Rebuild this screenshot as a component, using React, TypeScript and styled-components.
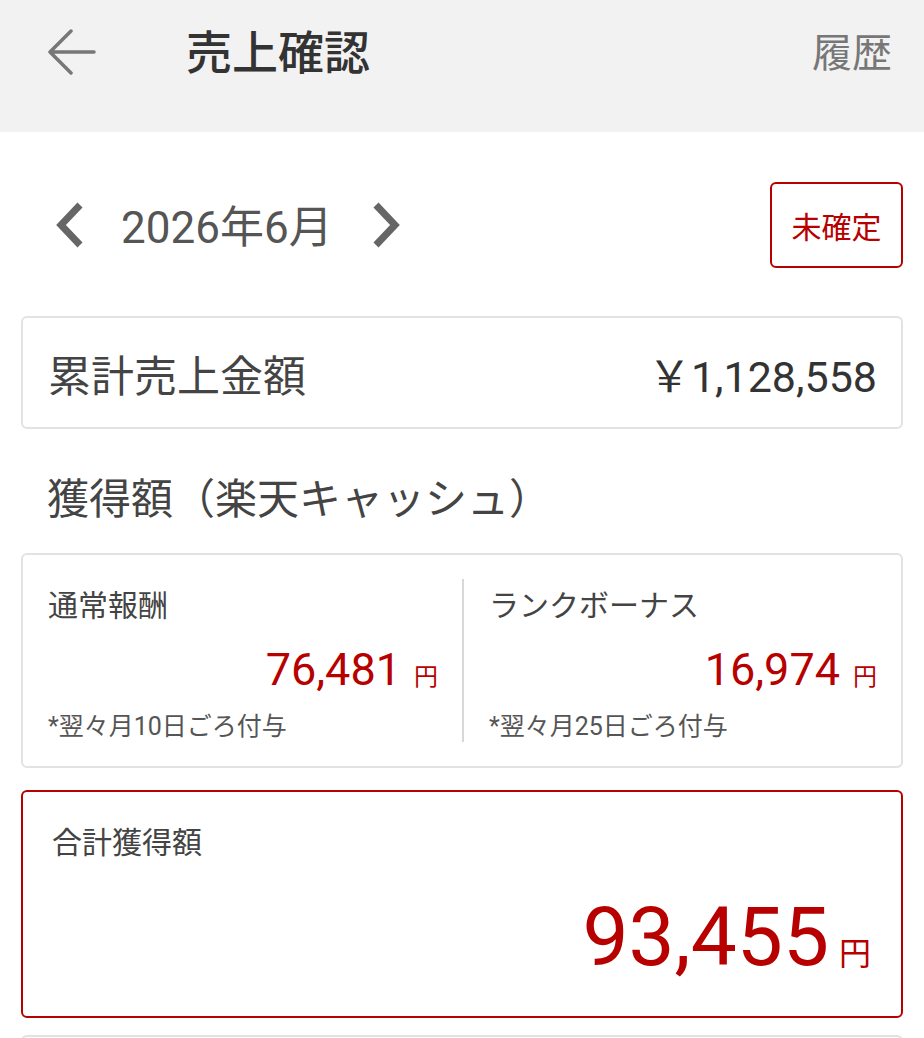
import React from "react";
import styled, { createGlobalStyle } from "styled-components";

const GlobalStyle = createGlobalStyle`
    html, body {
        margin: 0;
        padding: 0;
        background: #ffffff;
    }
    body {
        font-family: Roboto, "Noto Sans CJK JP", sans-serif;
        color: #444444;
    }
`;

const RED = "#b70000";

const Page = styled.div`
    width: 924px;
    height: 1038px;
    overflow: hidden;
`;

const Header = styled.header`
    height: 132px;
    background: #f2f2f2;
    display: flex;
    align-items: flex-start;
    padding: 26px 32px 0 46px;
    box-sizing: border-box;
`;

const BackButton = styled.button`
    border: none;
    background: none;
    padding: 0;
    width: 52px;
    height: 52px;
    display: flex;
    align-items: center;
    justify-content: center;
    cursor: pointer;
`;

const Title = styled.h1`
    margin: 4px 0 0 88px;
    font-size: 46px;
    font-weight: 500;
    color: #333333;
    line-height: 1;
    flex: 1;
`;

const HistoryLink = styled.span`
    margin-top: 8px;
    font-size: 40px;
    color: #777777;
    line-height: 1;
`;

const Content = styled.main`
    padding: 0 21px;
    display: flex;
    flex-direction: column;
`;

const MonthRow = styled.div`
    display: flex;
    align-items: center;
    justify-content: space-between;
    margin-top: 50px;
    height: 86px;
`;

const MonthNav = styled.div`
    display: flex;
    align-items: center;
    gap: 24px;
    padding-left: 32px;
`;

const Chevron = styled.button`
    border: none;
    background: none;
    padding: 0;
    display: flex;
    cursor: pointer;
`;

const MonthText = styled.span`
    font-size: 44px;
    color: #555555;
    line-height: 1;
    margin: 6px 12px 0 10px;
`;

const StatusBadge = styled.div`
    width: 133px;
    height: 86px;
    box-sizing: border-box;
    border: 2px solid ${RED};
    border-radius: 6px;
    display: flex;
    align-items: center;
    justify-content: center;
    font-size: 30px;
    color: ${RED};
`;

const Card = styled.section<{ $accent?: boolean }>`
    box-sizing: border-box;
    border: 2px solid ${(p) => (p.$accent ? RED : "#e2e2e2")};
    border-radius: 6px;
    background: #ffffff;
`;

const TotalSalesCard = styled(Card)`
    margin-top: 48px;
    height: 113px;
    display: flex;
    align-items: center;
    justify-content: space-between;
    padding: 0 24px 0 25px;
`;

const TotalLabel = styled.span`
    font-size: 43px;
    color: #444444;
`;

const TotalAmount = styled.span`
    font-size: 43px;
    color: #333333;
`;

const SectionTitle = styled.h2`
    margin: 50px 0 0 26px;
    height: 74px;
    font-size: 42px;
    font-weight: 400;
    color: #444444;
    line-height: 1;
`;

const RewardCard = styled(Card)`
    height: 215px;
    display: grid;
    grid-template-columns: 1fr 1fr;
    padding: 24px 0;
`;

const RewardCol = styled.div<{ $divider?: boolean }>`
    display: flex;
    flex-direction: column;
    padding: 0 24px 0 25px;
    border-left: ${(p) => (p.$divider ? "2px solid #d8d8d8" : "none")};
`;

const RewardLabel = styled.span`
    font-size: 30px;
    color: #444444;
    line-height: 1;
    margin-top: 12px;
`;

const AmountLine = styled.div<{ $size: number; $unit: number; $gap: number }>`
    display: flex;
    justify-content: flex-end;
    align-items: baseline;
    gap: ${(p) => p.$gap}px;
    color: ${RED};
    line-height: 1;

    & .value {
        font-size: ${(p) => p.$size}px;
    }
    & .unit {
        font-size: ${(p) => p.$unit}px;
    }
`;

const RewardAmount = styled(AmountLine)`
    margin-top: 26px;
`;

const RewardNote = styled.span`
    margin-top: 22px;
    font-size: 25px;
    color: #555555;
    line-height: 1;
`;

const GrandCard = styled(Card)`
    margin-top: 22px;
    height: 228px;
    display: flex;
    flex-direction: column;
    padding: 36px 30px 0 29px;
`;

const GrandLabel = styled.span`
    font-size: 30px;
    color: #444444;
    line-height: 1;
`;

const GrandAmount = styled(AmountLine)`
    margin-top: 38px;
`;

const NextCard = styled(Card)`
    margin-top: 17px;
    height: 60px;
`;

const ArrowLeftIcon = () => (
    <svg width="50" height="46" viewBox="0 0 50 46" fill="none">
        <path d="M47 23H4M24 2L3 23l21 21" stroke="#777" strokeWidth="3.5" strokeLinecap="round" strokeLinejoin="round" />
    </svg>
);

const ChevronIcon = ({ dir }: { dir: "left" | "right" }) => (
    <svg width="34" height="48" viewBox="0 0 34 48" fill="none">
        <path
            d={dir === "left" ? "M27 4L8 24l19 20" : "M7 4l19 20L7 44"}
            stroke="#666"
            strokeWidth="7"
            strokeLinejoin="miter"
        />
    </svg>
);

const rewards = [
    { label: "通常報酬", value: "76,481", note: "*翌々月10日ごろ付与" },
    { label: "ランクボーナス", value: "16,974", note: "*翌々月25日ごろ付与" },
];

const App = () => {
    return (
        <Page>
            <GlobalStyle />
            <Header>
                <BackButton aria-label="戻る">
                    <ArrowLeftIcon />
                </BackButton>
                <Title>売上確認</Title>
                <HistoryLink>履歴</HistoryLink>
            </Header>

            <Content>
                <MonthRow>
                    <MonthNav>
                        <Chevron aria-label="前月">
                            <ChevronIcon dir="left" />
                        </Chevron>
                        <MonthText>2026年6月</MonthText>
                        <Chevron aria-label="翌月">
                            <ChevronIcon dir="right" />
                        </Chevron>
                    </MonthNav>
                    <StatusBadge>未確定</StatusBadge>
                </MonthRow>

                <TotalSalesCard>
                    <TotalLabel>累計売上金額</TotalLabel>
                    <TotalAmount>￥1,128,558</TotalAmount>
                </TotalSalesCard>

                <SectionTitle>獲得額（楽天キャッシュ）</SectionTitle>

                <RewardCard>
                    {rewards.map((r, i) => (
                        <RewardCol key={r.label} $divider={i > 0}>
                            <RewardLabel>{r.label}</RewardLabel>
                            <RewardAmount $size={45} $unit={24} $gap={13}>
                                <span className="value">{r.value}</span>
                                <span className="unit">円</span>
                            </RewardAmount>
                            <RewardNote>{r.note}</RewardNote>
                        </RewardCol>
                    ))}
                </RewardCard>

                <GrandCard $accent>
                    <GrandLabel>合計獲得額</GrandLabel>
                    <GrandAmount $size={82} $unit={32} $gap={10}>
                        <span className="value">93,455</span>
                        <span className="unit">円</span>
                    </GrandAmount>
                </GrandCard>

                <NextCard />
            </Content>
        </Page>
    );
};

export default App;
